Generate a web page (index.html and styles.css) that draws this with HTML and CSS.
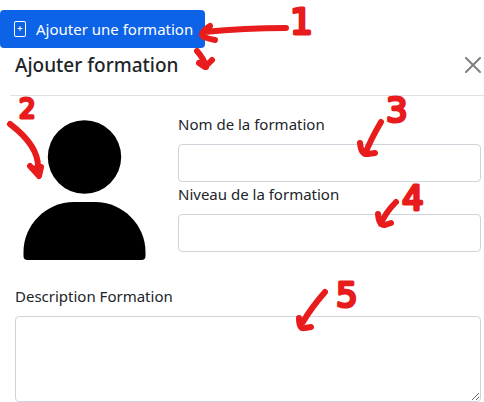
FILE: index.html
```html
<!DOCTYPE html>
<html lang="fr">
<head>
<meta charset="utf-8">
<meta name="viewport" content="width=device-width, initial-scale=1">
<title>Ajouter formation</title>
<link rel="stylesheet" href="styles.css">
</head>
<body>
<main class="page">
  <button class="add-button" type="button">
    <svg class="add-icon" width="16" height="16" viewBox="0 0 16 16" fill="currentColor" aria-hidden="true">
      <path d="M8 5a.5.5 0 0 1 .5.5V7H10a.5.5 0 0 1 0 1H8.500v1.500a.5.5 0 0 1-1 0V8H6a.5.5 0 0 1 0-1h1.500V5.500A.5.5 0 0 1 8 5z"/>
      <path d="M4 0a2 2 0 0 0-2 2v12a2 2 0 0 0 2 2h8a2 2 0 0 0 2-2V2a2 2 0 0 0-2-2H4zm0 1h8a1 1 0 0 1 1 1v12a1 1 0 0 1-1 1H4a1 1 0 0 1-1-1V2a1 1 0 0 1 1-1z"/>
    </svg>
    Ajouter une formation
  </button>
  <section class="dialog">
    <header class="dialog-header">
      <h1 class="dialog-title">Ajouter formation</h1>
      <button class="close-button" type="button" aria-label="Fermer">
        <svg width="16" height="16" viewBox="0 0 16 16" aria-hidden="true"><path d="M1 1l14 14M15 1L1 15" fill="none" stroke="currentColor" stroke-width="2" stroke-linecap="round"/></svg>
      </button>
    </header>
    <form class="dialog-body">
      <div class="identity">
        <svg class="avatar" viewBox="15 112 138 148" aria-hidden="true">
          <circle cx="84.500" cy="157" r="36.700"/>
          <path d="M74 202H95C123 202 145.500 225 145.500 252V256Q145.500 260 141.500 260H27.500Q23.500 260 23.500 256V252C23.500 225 46 202 74 202Z"/>
        </svg>
        <div class="fields">
          <label class="label" for="nom">Nom de la formation</label>
          <input class="control" id="nom" type="text">
          <label class="label" for="niveau">Niveau de la formation</label>
          <input class="control" id="niveau" type="text">
        </div>
      </div>
      <label class="label" for="description">Description Formation</label>
      <textarea class="control description" id="description" rows="3"></textarea>
    </form>
  </section>
  <svg class="notes" width="484" height="402" viewBox="0 0 484 402">
    <g class="ink">
      <path d="M286 28Q245 28 204 32M210 26Q198 34 204 37Q209 39 215 40"/>
      <path d="M197 51Q204 59 206 67M199 63L205 67L212 60"/>
      <path d="M10 124Q39 146 38 168M30 166L39 176L41 167L33 169"/>
      <path d="M381 122Q371 139 365 154M360 143Q361 155 368 154L375 153"/>
      <path d="M396 202Q385 213 381 224M378 214Q379 226 385 225L391 223"/>
      <path d="M325 292Q311 308 303 322M299 318Q299 330 305 328L311 327"/>
    </g>
    <g class="digits">
      <text class="digit-large" x="290" y="34">1</text>
      <text class="digit-small" x="19" y="118">2</text>
      <text x="386" y="122">3</text>
      <text x="402" y="210">4</text>
      <text x="336" y="307">5</text>
    </g>
  </svg>
</main>
</body>
</html>
```
FILE: styles.css
```css
* {
  box-sizing: border-box;
}

body {
  margin: 0;
  background: #fff;
  color: #212529;
  font-family: "Segoe UI", "Noto Sans", "Open Sans", sans-serif;
  font-size: 15px;
  line-height: 24px;
}

.page {
  position: relative;
  padding-top: 10px;
}

.add-button {
  display: flex;
  align-items: center;
  gap: 8px;
  height: 38px;
  padding: 0 12px;
  border: 0;
  border-radius: 4px;
  background: #0d63e8;
  color: #fff;
  font: inherit;
}

.dialog {
  margin-left: 10px;
}

.dialog-header {
  display: flex;
  align-items: center;
  justify-content: space-between;
  padding: 2px 3px 15px 5px;
  border-bottom: 1px solid #dee2e6;
}

.dialog-title {
  margin: 0;
  font-size: 19px;
  font-weight: 500;
  line-height: 30px;
}

.close-button {
  display: flex;
  padding: 0;
  border: 0;
  background: none;
  color: #7f7f7f;
}

.dialog-body {
  padding: 16px 3px 0 5px;
}

.identity {
  display: grid;
  grid-template-columns: 138px 1fr;
  gap: 25px;
  margin-bottom: 24px;
}

.avatar {
  display: block;
  width: 100%;
}

.label {
  display: block;
  margin-bottom: 8px;
}

.control {
  display: block;
  width: 100%;
  height: 38px;
  padding: 6px 12px;
  border: 1px solid #ced4da;
  border-radius: 4px;
  background: #fff;
  color: inherit;
  font: inherit;
}

.description {
  height: 86px;
  resize: vertical;
}

.notes {
  position: absolute;
  top: 0;
  left: 0;
  pointer-events: none;
}

.ink {
  fill: none;
  stroke: #e81c1c;
  stroke-width: 6px;
  stroke-linecap: round;
  stroke-linejoin: round;
}

.digits {
  fill: #e81c1c;
  stroke: #e81c1c;
  stroke-width: 3px;
  stroke-linejoin: round;
  font-family: "DejaVu Sans", sans-serif;
  font-size: 34px;
}

.digit-large {
  font-size: 36px;
}

.digit-small {
  font-size: 26px;
}
```
